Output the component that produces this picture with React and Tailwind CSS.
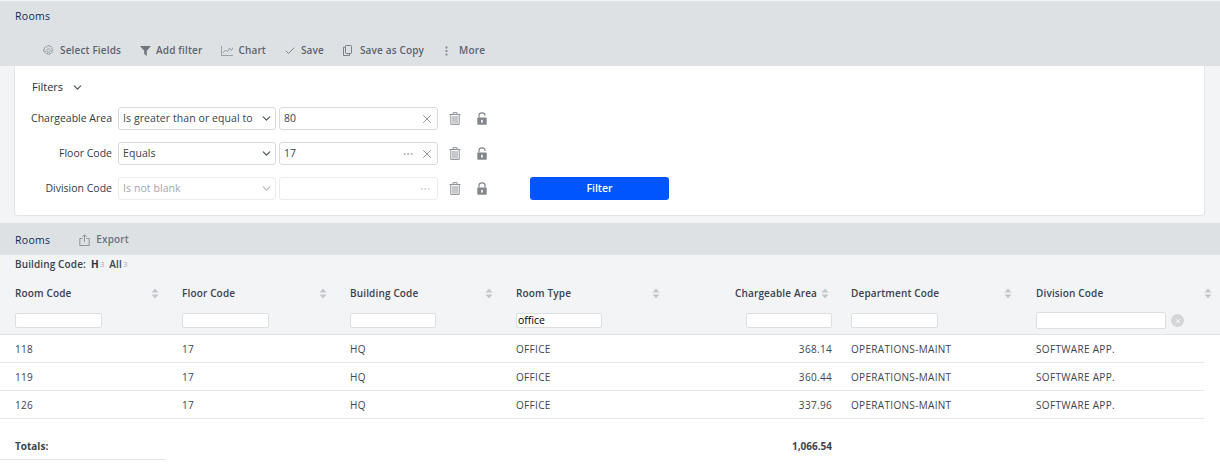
import React from "react";
import { ChevronDown, X, Check, Ellipsis } from "lucide-react";

const FONT = "[font-family:'Open_Sans',sans-serif]";

function GearIcon() {
  return (
    <svg width="11" height="11" viewBox="0 0 11 11" fill="none" stroke="#8f959c" strokeWidth="0.8">
      <path d="M4.6 0.5h1.8l0.3 1.4 1.2-0.7 1.3 1.3-0.8 1.2 1.4 0.4v1.8l-1.4 0.3 0.8 1.2-1.3 1.3-1.2-0.8-0.3 1.4H4.6l-0.3-1.4-1.2 0.8-1.3-1.3 0.8-1.2L0.5 6.4V4.6l1.4-0.4-0.8-1.2 1.3-1.3 1.2 0.7z" />
      <circle cx="5.5" cy="5.5" r="1.7" />
    </svg>
  );
}

function FunnelIcon() {
  return (
    <svg width="11" height="10" viewBox="0 0 11 10">
      <path d="M0 0h11L6.8 4.8V10L4.2 8V4.8z" fill="#6f7680" />
    </svg>
  );
}

function ChartIcon() {
  return (
    <svg width="12" height="10" viewBox="0 0 12 10" fill="none" stroke="#8a9098" strokeWidth="0.8">
      <path d="M0.5 0v9.5H12" />
      <path d="M2 7l2.5-3 2 2 2-4 2 2.5 1.5-3" />
    </svg>
  );
}

function CopyIcon() {
  return (
    <svg width="9" height="11" viewBox="0 0 9 11" fill="none" stroke="#6f7680" strokeWidth="0.9">
      <rect x="2.5" y="0.5" width="6" height="8" rx="0.8" />
      <path d="M2.5 2.2H0.5v8.3h6V8.5" />
    </svg>
  );
}

function DotsIcon() {
  return (
    <svg width="3" height="10" viewBox="0 0 3 10">
      <rect x="0.5" y="0.5" width="2" height="2" fill="#8a9098" />
      <rect x="0.5" y="4" width="2" height="2" fill="#8a9098" />
      <rect x="0.5" y="7.5" width="2" height="2" fill="#8a9098" />
    </svg>
  );
}

function ExportIcon() {
  return (
    <svg width="11" height="12" viewBox="0 0 11 12" fill="none" stroke="#7b828a" strokeWidth="0.8">
      <path d="M3.5 4.5H0.8v7h9.4v-7H7.5" />
      <path d="M5.5 8V0.8M3.3 3l2.2-2.2L7.7 3" />
    </svg>
  );
}

function TrashIcon() {
  return (
    <svg width="12" height="13" viewBox="0 0 12 13" fill="none" stroke="#8d9198" strokeWidth="1">
      <path d="M0.5 2.5h11" />
      <path d="M4 2V0.7h4V2" />
      <path d="M1.8 3v9.4h8.4V3" />
      <path d="M4 4v7.5M6 4v7.5M8 4v7.5" />
    </svg>
  );
}

function LockIcon({ open }) {
  return (
    <svg width="10" height="13" viewBox="0 0 10 13" fill="none">
      <path
        d={open ? "M2 5.5V3.2C2 1.7 3.2 0.8 5 0.8S8 1.7 8 3.2v0.6" : "M2 5.5V3.2C2 1.7 3.2 0.8 5 0.8S8 1.7 8 3.2v2.3"}
        stroke="#82868d"
        strokeWidth="1.2"
      />
      <rect x="0.3" y="5.5" width="9.4" height="7.2" rx="0.8" fill="#82868d" />
      <rect x="4.2" y="7.8" width="1.6" height="2.8" fill="#fff" />
    </svg>
  );
}

function SortIcon() {
  return (
    <svg width="8" height="11" viewBox="0 0 8 11" className="shrink-0">
      <path d="M4 0.5L7.5 4.5H0.5z" fill="#c3c7cc" />
      <path d="M4 10.5L7.5 6.5H0.5z" fill="#c3c7cc" />
    </svg>
  );
}

function ToolItem({ icon, label, gap = "gap-[5px]", mr = "mr-[19px]" }) {
  return (
    <div className={`flex items-center ${gap} ${mr}`}>
      {icon}
      <span className="text-[10px] font-semibold tracking-[0.15px] text-[#5b6470] whitespace-nowrap">{label}</span>
    </div>
  );
}

function FilterRow({ label, op, value, dots, clear, disabled, children }) {
  return (
    <div className="flex h-[35px] items-center">
      <span className="w-[103px] pr-[6px] text-right text-[10.5px] text-[#323a45] shrink-0 whitespace-nowrap">{label}</span>
      <div
        className={`flex h-[23px] w-[158px] items-center justify-between rounded-[3px] border bg-white pl-[4px] pr-[2px] text-[10.5px] tracking-[0.08px] ${
          disabled ? "border-[#ebecee] text-[#a3a7ad]" : "border-[#d8dadd] text-[#3b4350]"
        }`}
      >
        <span className="whitespace-nowrap">{op}</span>
        <ChevronDown size={13} strokeWidth={2.2} className={disabled ? "text-[#b5b8bd]" : "text-[#4b5563]"} />
      </div>
      <div
        className={`ml-[3px] flex h-[23px] w-[159px] items-center rounded-[3px] border bg-white pl-[4px] pr-[3px] text-[10.5px] text-[#3b4350] ${
          disabled ? "border-[#ebecee]" : "border-[#d8dadd]"
        }`}
      >
        <span className="grow">{value}</span>
        {dots && (
          <Ellipsis size={12} strokeWidth={1.6} className={disabled ? "mr-[3px] text-[#c6c8cc]" : "mr-[6px] text-[#9a9ea4]"} />
        )}
        {clear && <X size={14} strokeWidth={1.3} className="text-[#6f747b]" />}
      </div>
      <div className="ml-[11px] flex w-[12px] justify-center">
        <TrashIcon />
      </div>
      <div className="ml-[15px] flex w-[12px] justify-center">
        <LockIcon open={!disabled} />
      </div>
      {children}
    </div>
  );
}

const GRID = "grid grid-cols-[15px_167px_168px_166px_168px_167px_185px_184px]";

function HeadCell({ label, pr = "pr-[23px]" }) {
  return (
    <div className={`flex items-center justify-between ${pr}`}>
      <span className="text-[10px] font-semibold tracking-[0.15px] text-[#39424e] whitespace-nowrap">{label}</span>
      <SortIcon />
    </div>
  );
}

function FilterInput({ w = "w-[87px]", value }) {
  return (
    <div className={`flex h-[15px] ${w} items-center rounded-[2px] border border-[#dcdee1] bg-white pl-[1px] text-[10.5px] text-black`}>
      {value}
    </div>
  );
}

function Row({ cells }) {
  return (
    <div className={`${GRID} h-[28px] w-[1204px] items-center border-b border-[#e5e6e8] pt-[2px] text-[10px] tracking-[0.32px] text-[#3c4450]`}>
      <div />
      <div>{cells[0]}</div>
      <div>{cells[1]}</div>
      <div>{cells[2]}</div>
      <div>{cells[3]}</div>
      <div className="pr-[19px] text-right">{cells[4]}</div>
      <div>{cells[5]}</div>
      <div>{cells[6]}</div>
    </div>
  );
}

export default function App() {
  return (
    <div className={`${FONT} h-[469px] w-[1220px] overflow-hidden bg-white`}>
      <div className="bg-[#f3f4f6] pt-px">
        <div className="flex h-[65px] flex-col justify-between bg-[#dee1e4] pb-[8px] pl-[15px] pt-[8px]">
          <div className="text-[10.5px] tracking-[0.3px] text-[#0f2a5a]">Rooms</div>
          <div className="flex items-center pl-[28px]">
            <ToolItem icon={<GearIcon />} label="Select Fields" gap="gap-[6px]" />
            <ToolItem icon={<FunnelIcon />} label="Add filter" />
            <ToolItem icon={<ChartIcon />} label="Chart" mr="mr-[18px]" />
            <ToolItem icon={<Check size={12} strokeWidth={2} className="text-[#7d848d]" />} label="Save" />
            <ToolItem icon={<CopyIcon />} label="Save as Copy" gap="gap-[8px]" mr="mr-[21px]" />
            <ToolItem icon={<DotsIcon />} label="More" gap="gap-[11px]" />
          </div>
        </div>

        <div className="ml-[14px] mr-[15px] h-[150px] rounded-b-[4px] border border-t-0 border-[#e2e4e7] bg-white pt-[14px]">
          <div className="flex h-[14px] items-center gap-[8px] pl-[17px] text-[11px] text-[#252d3a]">
            Filters
            <ChevronDown size={13} strokeWidth={2.2} className="text-[#4b5563]" />
          </div>
          <div className="mt-[7px]">
            <FilterRow label="Chargeable Area" op="Is greater than or equal to" value="80" clear />
            <FilterRow label="Floor Code" op="Equals" value="17" dots clear />
            <FilterRow label="Division Code" op="Is not blank" dots disabled>
              <button className="ml-[42px] h-[23px] w-[139px] rounded-[3px] bg-[#0055ff] text-[10.5px] font-semibold text-white">
                Filter
              </button>
            </FilterRow>
          </div>
        </div>

        <div className="h-[7px]" />

        <div className="flex h-[32px] items-center bg-[#dee1e4] pl-[15px] pt-[3px]">
          <span className="text-[10.5px] tracking-[0.3px] text-[#0f2a5a]">Rooms</span>
          <div className="ml-[29px] flex items-center gap-[6px] pb-[2px]">
            <ExportIcon />
            <span className="text-[10px] font-semibold tracking-[0.15px] text-[#6b7380]">Export</span>
          </div>
        </div>

        <div className="flex h-[21px] items-center pb-[2px] pl-[15px] text-[10px] font-semibold tracking-[0.12px] text-[#39424e]">
          <span>Building Code:</span>
          <span className="ml-[5px] font-bold text-[#2a3340]">H</span>
          <span className="mb-[2px] ml-[1px] text-[8px] font-normal text-[#a3a9b0]">3</span>
          <span className="ml-[5px]">All</span>
          <span className="mb-[2px] ml-[1px] text-[8px] font-normal text-[#a3a9b0]">3</span>
        </div>

        <div className="h-[59px] border-b border-[#e2e4e7]">
          <div className={`${GRID} h-[35px] items-center`}>
            <div />
            <HeadCell label="Room Code" />
            <HeadCell label="Floor Code" />
            <HeadCell label="Building Code" />
            <HeadCell label="Room Type" pr="pr-[24px]" />
            <div className="flex items-center justify-end gap-[4px] pr-[22px]">
              <span className="text-[10px] font-semibold tracking-[0.15px] text-[#39424e] whitespace-nowrap">Chargeable Area</span>
              <SortIcon />
            </div>
            <HeadCell label="Department Code" pr="pr-[24px]" />
            <HeadCell label="Division Code" pr="pr-[8px]" />
          </div>
          <div className={`${GRID} mt-[1px] items-center`}>
            <div />
            <div><FilterInput /></div>
            <div><FilterInput /></div>
            <div><FilterInput w="w-[86px]" /></div>
            <div><FilterInput w="w-[86px]" value="office" /></div>
            <div className="flex justify-end pr-[19px]"><FilterInput w="w-[86px]" /></div>
            <div><FilterInput /></div>
            <div className="flex items-center gap-[5px]">
              <div className="h-[17px] w-[130px] rounded-[2px] border border-[#dcdee1] bg-white" />
              <div className="flex h-[13px] w-[13px] items-center justify-center rounded-full bg-[#d3d5d8]">
                <X size={8} strokeWidth={2.5} className="text-white" />
              </div>
            </div>
          </div>
        </div>
      </div>

      <Row cells={["118", "17", "HQ", "OFFICE", "368.14", "OPERATIONS-MAINT", "SOFTWARE APP."]} />
      <Row cells={["119", "17", "HQ", "OFFICE", "360.44", "OPERATIONS-MAINT", "SOFTWARE APP."]} />
      <Row cells={["126", "17", "HQ", "OFFICE", "337.96", "OPERATIONS-MAINT", "SOFTWARE APP."]} />

      <div className="mt-[20px] flex h-[21px] w-[832px] items-start justify-between text-[10px] font-bold text-[#3c4450]">
        <div className="h-[21px] w-[166px] border-b border-[#e5e6e8] pl-[15px]">Totals:</div>
        <div>1,066.54</div>
      </div>
    </div>
  );
}
